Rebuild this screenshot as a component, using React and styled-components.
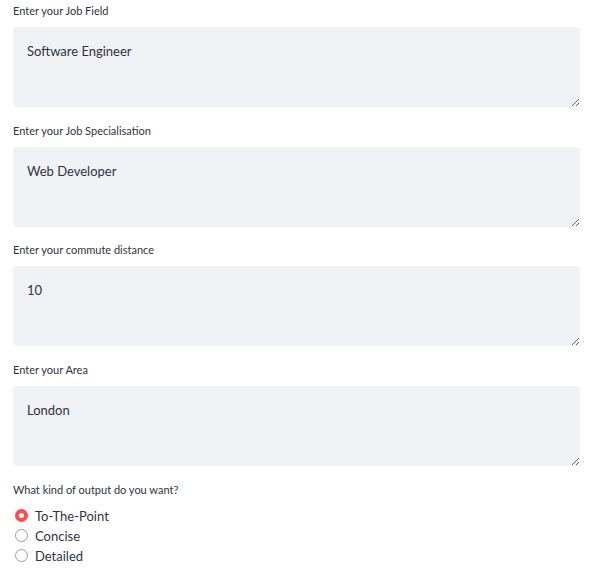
import React, { useState } from 'react';
import styled, { createGlobalStyle } from 'styled-components';

const GlobalStyle = createGlobalStyle`
  body {
    margin: 0;
    background: #ffffff;
    font-family: "Source Sans Pro", Lato, "Noto Sans", sans-serif;
    color: #31333f;
  }
`;

const Page = styled.div`
  display: flex;
  flex-direction: column;
  gap: 15.7px;
  padding: 3px 25px 0 13px;
`;

const Field = styled.div`
  display: flex;
  flex-direction: column;
  gap: 8px;
`;

const Label = styled.label`
  font-size: 11px;
  line-height: 16px;
  color: #31333f;
`;

const TextArea = styled.textarea`
  box-sizing: border-box;
  height: 80px;
  width: 100%;
  margin: 0;
  padding: 15px 14px 14px;
  border: none;
  border-radius: 4px;
  background: #f0f2f6;
  font-family: inherit;
  font-size: 13px;
  line-height: 18px;
  color: #31333f;
  resize: vertical;
  outline: none;
`;

const RadioGroup = styled.div`
  display: flex;
  flex-direction: column;
  gap: 2px;
  margin-top: 1px;
`;

const RadioRow = styled.label`
  display: flex;
  align-items: center;
  gap: 7px;
  height: 18px;
  padding-left: 2px;
  font-size: 13px;
  cursor: pointer;
`;

const Dot = styled.span`
  box-sizing: border-box;
  width: 13px;
  height: 13px;
  border-radius: 50%;
  border: ${({ $on }) => ($on ? '4px solid #ff4b4b' : '1px solid #9a9ca3')};
  background: #ffffff;
`;

const fields = [
  { label: 'Enter your Job Field', value: 'Software Engineer' },
  { label: 'Enter your Job Specialisation', value: 'Web Developer' },
  { label: 'Enter your commute distance', value: '10' },
  { label: 'Enter your Area', value: 'London' },
];

const options = ['To-The-Point', 'Concise', 'Detailed'];

export default function App() {
  const [choice, setChoice] = useState(options[0]);
  return (
    <>
      <GlobalStyle />
      <Page>
        {fields.map((f) => (
          <Field key={f.label}>
            <Label>{f.label}</Label>
            <TextArea defaultValue={f.value} />
          </Field>
        ))}
        <Field>
          <Label>What kind of output do you want?</Label>
          <RadioGroup>
            {options.map((o) => (
              <RadioRow key={o} onClick={() => setChoice(o)}>
                <Dot $on={choice === o} />
                {o}
              </RadioRow>
            ))}
          </RadioGroup>
        </Field>
      </Page>
    </>
  );
}
